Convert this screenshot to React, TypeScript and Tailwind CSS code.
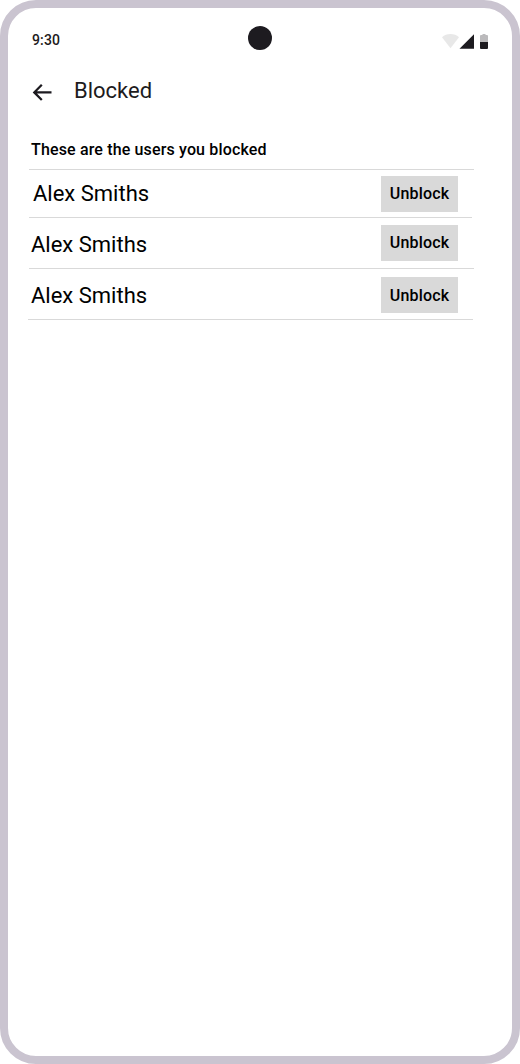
interface BlockedUser {
  name: string;
  row: string;
  label: string;
  button: string;
}

const users: BlockedUser[] = [
  { name: "Alex Smiths", row: "ml-[21px] w-[443px] h-12 pl-1 pr-[14px]", label: "mt-[10px]", button: "mt-[6px]" },
  { name: "Alex Smiths", row: "ml-[21px] w-[445px] h-[51px] pl-[2px] pr-4", label: "mt-[13px]", button: "mt-[7px]" },
  { name: "Alex Smiths", row: "ml-5 w-[445px] h-[51px] pl-[3px] pr-[15px]", label: "mt-[13px]", button: "mt-[8px] pt-[2px]" },
];

function StatusBar() {
  return (
    <div className="relative flex h-[52px] items-start justify-between pl-6 pr-6 pt-[22px]">
      <span className="text-[14px] leading-5 font-medium tracking-[0.14px] text-[#1d1b20]">9:30</span>
      <div className="absolute left-[240px] top-[18px] size-6 rounded-full bg-[#1d1b20]" />
      <svg width="46" height="17" viewBox="0 0 46 17" className="mt-[3px]" fill="#1d1b20" aria-hidden="true">
        <path d="M8.5 15.3 0 4.2C2.3 2.2 5.2 1 8.5 1s6.2 1.2 8.5 3.2Z" opacity="0.1" />
        <path d="M17.5 15.8 32 1.3v14.5Z" />
        <path d="M38 3a1 1 0 0 1 1-1h1.5V1h3v1H45a1 1 0 0 1 1 1v6h-8Z" opacity="0.3" />
        <path d="M38 9h8v6a1 1 0 0 1-1 1h-6a1 1 0 0 1-1-1Z" />
      </svg>
    </div>
  );
}

export default function App() {
  return (
    <main className="flex h-[1064px] w-[520px] flex-col overflow-hidden rounded-[36px] border-8 border-[#cac4d0] bg-white font-['Roboto',sans-serif] text-black">
      <StatusBar />
      <header className="flex h-16 items-start pl-[22px] pt-[17px] text-[#1d1b20]">
        <button className="mt-[3px] size-6" aria-label="Back">
          <svg width="24" height="24" viewBox="0 0 24 24" fill="currentColor">
            <path d="m7 13.5 5.6 5.7-1.6 1.5-8.3-8.3L11 4.1l1.6 1.5L7 11.3h14.5v2.2Z" />
          </svg>
        </button>
        <h1 className="ml-5 text-[22px] leading-7">Blocked</h1>
      </header>
      <h2 className="h-[45px] pl-[23px] pt-[14px] text-[16px] leading-6 font-medium tracking-[0.15px]">
        These are the users you blocked
      </h2>
      <div className="ml-[21px] h-px w-[445px] shrink-0 bg-[#d9d9d9]" />
      <ul>
        {users.map((user, i) => (
          <li key={i} className={`flex items-start justify-between border-b border-[#d9d9d9] ${user.row}`}>
            <span className={`text-[22px] leading-7 ${user.label}`}>{user.name}</span>
            <button className={`h-9 w-[77px] bg-[#d9d9d9] text-[16px] leading-6 font-medium tracking-[0.15px] ${user.button}`}>
              Unblock
            </button>
          </li>
        ))}
      </ul>
    </main>
  );
}
